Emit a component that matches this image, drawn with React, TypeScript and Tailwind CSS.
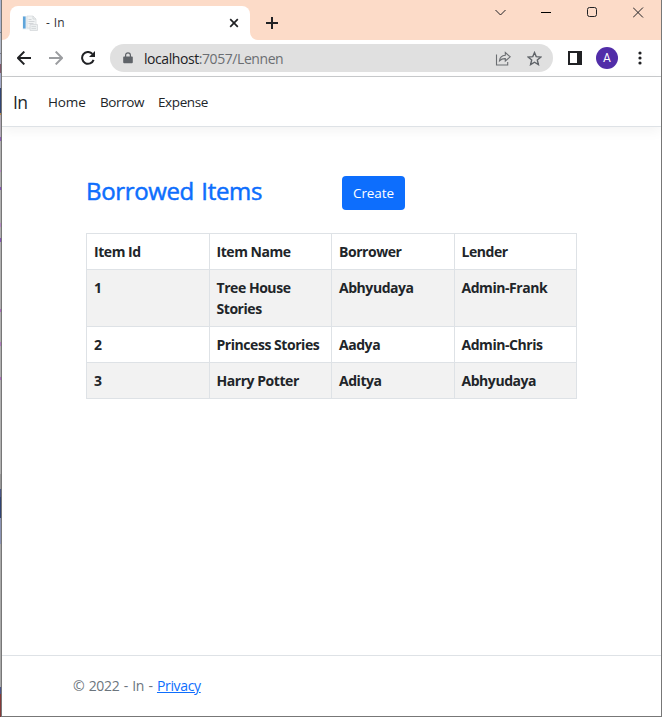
import React from 'react';

const edge: [string, string][] = [
  ['h-[32px]', 'bg-[#a9b4d0]'],
  ['h-[1px]', 'bg-[#777b88]'],
  ['h-[20px]', 'bg-[#b3b9c8]'],
  ['h-[1px]', 'bg-[#777b88]'],
  ['h-[10px]', 'bg-[#a9afc4]'],
  ['h-[9px]', 'bg-[#80576a]'],
  ['h-[15px]', 'bg-[#a3a9c9]'],
  ['h-[25px]', 'bg-[#344777]'],
  ['h-[2px]', 'bg-[#b98b4d]'],
  ['h-[22px]', 'bg-[#b3acb8]'],
  ['h-[4px]', 'bg-[#8a5fb4]'],
  ['h-[29px]', 'bg-[#b0b0b0]'],
  ['h-[2px]', 'bg-[#b78bc4]'],
  ['h-[15px]', 'bg-[#b0b0b0]'],
  ['h-[3px]', 'bg-[#8455b5]'],
  ['h-[33px]', 'bg-[#b0b0b0]'],
  ['h-[4px]', 'bg-[#b78bc4]'],
  ['h-[11px]', 'bg-[#b0b0b0]'],
  ['h-[4px]', 'bg-[#8455b5]'],
  ['h-[67px]', 'bg-[#b0b0b0]'],
  ['h-[3px]', 'bg-[#a96cbc]'],
  ['h-[30px]', 'bg-[#b0b0b0]'],
  ['h-[4px]', 'bg-[#b27cc0]'],
  ['h-[31px]', 'bg-[#b0b0b0]'],
  ['h-[3px]', 'bg-[#a96cbc]'],
  ['h-[94px]', 'bg-[#b0b0b0]'],
  ['h-[15px]', 'bg-[#979797]'],
  ['h-[8px]', 'bg-[#4a5685]'],
  ['h-[21px]', 'bg-[#304373]'],
  ['h-[26px]', 'bg-[#8a93b4]'],
  ['h-[143px]', 'bg-[#a9a9a9]'],
  ['h-[7px]', 'bg-[#4b5488]'],
  ['h-[23px]', 'bg-[#843838]'],
];

const rows = [
  ['1', 'Tree House Stories', 'Abhyudaya', 'Admin-Frank'],
  ['2', 'Princess Stories', 'Aadya', 'Admin-Chris'],
  ['3', 'Harry Potter', 'Aditya', 'Abhyudaya'],
];

function TabStrip() {
  return (
    <div className="flex h-10 shrink-0 bg-[#fcdbc8]">
      <svg className="mt-8 h-2 w-2 shrink-0" viewBox="0 0 8 8"><path d="M8 0v8H0a8 8 0 0 0 8-8Z" fill="#fff" /></svg>
      <div className="mt-[6px] flex h-[34px] w-[240px] shrink-0 items-center rounded-t-lg bg-white pl-3 pr-[11px]">
        <svg className="h-4 w-4 shrink-0" viewBox="0 0 16 16">
          <path d="M.5 1h11v13.500H.5z" fill="#e9f0f5" />
          <path d="M1 1.500h2.600v12H1z" fill="#5fa5da" />
          <path d="M5 1h6l3 3v9H5z" fill="#f1f3f4" stroke="#dadde0" strokeWidth=".8" />
          <path d="M11 1v3h3" fill="none" stroke="#cfd3d6" strokeWidth=".8" />
          <path d="M6.500 4.500h3M6.500 6.500h6M6.500 8.500h5" stroke="#d3d6d9" />
          <path d="M8 9.500h7.500v6H8z" fill="#eceff0" stroke="#d5d8db" strokeWidth=".8" />
          <path d="M9.500 11.500h4.500M9.500 13.500h4.500" stroke="#d0d4d7" strokeWidth=".8" />
        </svg>
        <span className="ml-2 text-[12px] text-[#303236] [word-spacing:0.8px]">- In</span>
        <svg className="ml-auto h-[10px] w-[10px]" viewBox="0 0 10 10"><path d="m1.200 1.200 7.600 7.600m0-7.600L1.200 8.800" stroke="#202124" strokeWidth="1.700" /></svg>
      </div>
      <svg className="mt-8 h-2 w-2 shrink-0" viewBox="0 0 8 8"><path d="M0 0v8h8a8 8 0 0 1-8-8Z" fill="#fff" /></svg>
      <svg className="ml-2 mt-[17px] h-3 w-3 shrink-0" viewBox="0 0 12 12"><path d="M6 0v12M0 6h12" stroke="#202124" strokeWidth="2" /></svg>
      <div className="ml-auto mr-[17px] flex h-6 items-center gap-[35px]">
        <svg className="h-[11px] w-[11px]" viewBox="0 0 11 11" fill="none" stroke="#202124"><path d="m.5 3 5 5 5-5" /></svg>
        <svg className="h-[11px] w-[11px]" viewBox="0 0 11 11"><path d="M0 5h10v1H0z" fill="#000" /></svg>
        <svg className="h-[11px] w-[11px]" viewBox="0 0 11 11" fill="none" stroke="#202124"><rect x=".5" y=".5" width="9" height="9" rx="2" /></svg>
        <svg className="h-[11px] w-[11px]" viewBox="0 0 11 11" fill="none" stroke="#202124"><path d="m0 .5 10 10m0-10-10 10" /></svg>
      </div>
    </div>
  );
}

function Toolbar() {
  return (
    <div className="flex h-[37px] shrink-0 items-center border-b border-[#c9cbcd] bg-white pl-[15px] pr-[19px]">
      <svg className="h-[14px] w-[14px]" viewBox="0 0 14 14" fill="none" stroke="#202124" strokeWidth="2"><path d="M14 7H1.300M7.300 .6.9 7l6.400 6.400" /></svg>
      <svg className="ml-[18px] h-[14px] w-[14px]" viewBox="0 0 14 14" fill="none" stroke="#9b9da0" strokeWidth="2"><path d="M0 7h12.700M6.700 .6l6.400 6.400-6.400 6.400" /></svg>
      <svg className="ml-[18px] h-[14px] w-[14px]" viewBox="0 0 14 14"><path d="M12.600 8.800A5.900 5.900 0 1 1 11.400 2.900" fill="none" stroke="#202124" strokeWidth="2" /><path d="M14 0v6H8z" fill="#202124" /></svg>
      <div className="ml-[15px] flex h-7 w-[443px] items-center rounded-full bg-[#e0e0e0] pl-[13px] pr-[11px]">
        <svg className="h-3 w-[10px]" viewBox="0 0 10 12"><path d="M1 4.500h8a.8.8 0 0 1 .8.8v5a1 1 0 0 1-1 1H1.200a1 1 0 0 1-1-1v-5A.8.8 0 0 1 1 4.500Z" fill="#5f6368" /><path d="M2.600 5V3.200a2.400 2.400 0 0 1 4.800 0V5" fill="none" stroke="#5f6368" strokeWidth="1.200" /></svg>
        <span className="ml-[11px] whitespace-nowrap text-[14px] tracking-[-0.43px] text-[#6b6e72]"><span className="text-[#202124]">localhost</span>:7057/Lennen</span>
        <svg className="ml-auto h-[15px] w-[16px]" viewBox="0 0 16 15" fill="none" stroke="#6b6e72" strokeWidth="1.100"><path d="M1.500 3.500V14h11.200v-3M4.500 9.800C4.800 6.500 7 4.400 10.300 4.200V1.500l4.900 4.300-4.900 4.200V7.600C8 7.500 6 8.200 4.500 9.800Z" /></svg>
        <svg className="ml-4 h-[15px] w-[15px]" viewBox="0 0 15 15" fill="none" stroke="#5f6368" strokeWidth="1.400"><path d="m7.500 1.600 1.700 4 4.700.4-3.600 3 1.100 4.600-3.900-2.400-3.900 2.400 1.100-4.600L1.100 6l4.700-.4Z" /></svg>
      </div>
      <svg className="ml-[15px] h-[14px] w-[14px]" viewBox="0 0 14 14"><path fillRule="evenodd" d="M0 0h14v14H0ZM2 2v10h7V2Z" fill="#202124" /></svg>
      <div className="ml-[14px] flex h-[22px] w-[22px] items-center justify-center rounded-full bg-[#512da8] font-[Roboto,sans-serif] text-[12px] leading-none text-white">A</div>
      <svg className="ml-auto h-[14px] w-1" viewBox="0 0 4 14" fill="#202124"><circle cx="2" cy="2" r="1.600" /><circle cx="2" cy="7" r="1.600" /><circle cx="2" cy="12" r="1.600" /></svg>
    </div>
  );
}

export default function App() {
  return (
    <div className="flex h-[717px] w-[662px] overflow-hidden bg-white font-['Open_Sans','Noto_Sans',sans-serif] text-[14px] text-[#212529]">
      <div className="flex w-px shrink-0 flex-col">
        {edge.map(([h, c], i) => <div key={i} className={`${h} ${c} shrink-0`} />)}
      </div>
      <div className="flex min-w-0 flex-1 flex-col border-x border-b border-[#777777]">
        <TabStrip />
        <Toolbar />
        <nav className="flex h-[50px] shrink-0 items-center border-b border-[#dee2e6] pl-[11px] pt-px shadow-[0_4px_12px_rgba(0,0,0,0.05)]">
          <span className="w-[35px] text-[17.500px] tracking-[-0.6px]">In</span>
          <span className="w-[52px] text-[13.500px] tracking-[-0.1px]">Home</span>
          <span className="w-[58px] text-[13.500px] tracking-[-0.4px]">Borrow</span>
          <span className="text-[13.500px] tracking-[-0.4px]">Expense</span>
        </nav>
        <main className="flex flex-1 flex-col pl-[84px] pt-[49px]">
          <div className="flex h-[34px] items-start">
            <h2 className="w-[256px] whitespace-nowrap text-[24px] font-normal leading-[30px] tracking-[-0.35px] text-[#0d6efd] [-webkit-text-stroke:0.5px_#0d6efd] [word-spacing:1.5px]">Borrowed Items</h2>
            <button className="h-[34px] w-[63px] rounded bg-[#0d6efd] text-[13.500px] tracking-[-0.1px] text-white">Create</button>
          </div>
          <table className="mt-[23px] w-[491px] table-fixed border-collapse text-left text-[14px] font-bold leading-[21px] tracking-[-0.45px]">
            <thead>
              <tr className="h-[36px]">
                {['Item Id', 'Item Name', 'Borrower', 'Lender'].map((t) => <th key={t} className="border border-[#dee2e6] px-[7px] py-[7px] align-top">{t}</th>)}
              </tr>
            </thead>
            <tbody>
              {rows.map((r) => (
                <tr key={r[0]} className="h-[36px] odd:bg-[#f2f2f2]">
                  {r.map((t) => <td key={t} className="border border-[#dee2e6] px-[7px] py-[7px] align-top">{t}</td>)}
                </tr>
              ))}
            </tbody>
          </table>
        </main>
        <footer className="flex h-[61px] shrink-0 items-center whitespace-pre border-t border-[#dee2e6] pb-px pl-[71px] text-[14px] tracking-[-0.35px] text-[#6c757d] [word-spacing:1.1px]">
          © 2022 - In - <a className="text-[#0d6efd] underline">Privacy</a>
        </footer>
      </div>
    </div>
  );
}
